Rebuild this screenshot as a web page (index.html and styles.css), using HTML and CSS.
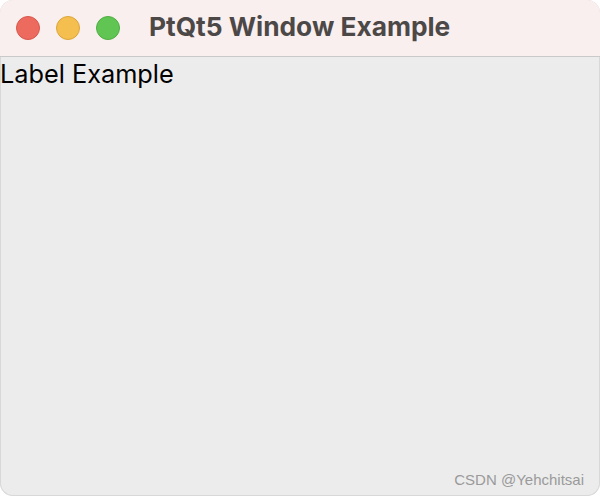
FILE: index.html
```html
<!DOCTYPE html>
<html>
<head>
<meta charset="utf-8">
<link rel="stylesheet" href="styles.css">
</head>
<body>
<div class="window">
  <div class="titlebar">
    <div class="lights">
      <span class="light red"></span>
      <span class="light yellow"></span>
      <span class="light green"></span>
    </div>
    <div class="title">PtQt5 Window Example</div>
  </div>
  <div class="content">
    <div class="label">Label Example</div>
    <div class="watermark">CSDN @Yehchitsai</div>
  </div>
</div>
</body>
</html>
```
FILE: styles.css
```css
html, body {
  margin: 0;
  padding: 0;
  background: #ffffff;
}
.window {
  width: 600px;
  height: 496px;
  box-sizing: border-box;
  border-radius: 13px;
  overflow: hidden;
  display: flex;
  flex-direction: column;
  background: #ececec;
  box-shadow: inset 0 0 0 1px #d8d8d8;
}
.titlebar {
  height: 56px;
  flex: none;
  background: #f9efee;
  border-bottom: 1px solid #c9c9c9;
  display: flex;
  align-items: center;
  padding-left: 16px;
}
.lights {
  display: flex;
  gap: 16px;
}
.light {
  width: 24px;
  height: 24px;
  border-radius: 50%;
  box-sizing: border-box;
}
.red { background: #ed6a5e; border: 1px solid #d9564b; }
.yellow { background: #f5bf4f; border: 1px solid #dca53a; }
.green { background: #61c554; border: 1px solid #4fae42; }
.title {
  margin-left: 29px;
  font-family: Inter, "Liberation Sans", Arial, sans-serif;
  font-weight: bold;
  font-size: 26.3px;
  color: #4d4848;
  margin-top: -3px;
}
.content {
  flex: 1;
  position: relative;
  display: flex;
  flex-direction: column;
  justify-content: space-between;
}
.label {
  font-family: Inter, "Liberation Sans", Arial, sans-serif;
  font-size: 25.3px;
  color: #000;
  margin-top: 4px;
  line-height: 26px;
}
.watermark {
  align-self: flex-end;
  font-family: "Liberation Sans", Arial, sans-serif;
  font-size: 15px;
  color: #9a9a9a;
  margin-right: 16px;
  margin-bottom: 8px;
}
```
